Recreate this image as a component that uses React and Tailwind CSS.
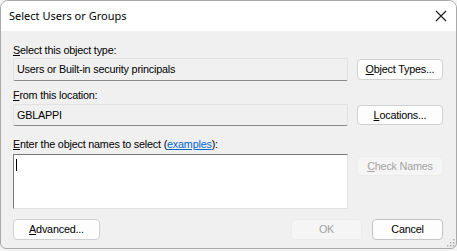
export default function App() {
  const body = { fontFamily: '"Liberation Sans", Arial, sans-serif' };

  return (
    <div className="w-[457px] h-[251px] bg-[#f3f3f3] overflow-hidden">
      <div className="relative w-[457px] h-[249px] flex flex-col rounded-t-[8px] rounded-b-[6px] border border-[#a9a9a9] overflow-hidden bg-[#f0f0f0]">
        {/* title bar */}
        <div className="h-[30px] bg-white flex items-center justify-between pl-[8px] pr-[9px] shrink-0">
          <span
            className="text-[11px] text-black"
            style={{ fontFamily: '"Noto Sans", "Open Sans", sans-serif' }}
          >
            Select Users or Groups
          </span>
          <svg width="12" height="12" viewBox="0 0 12 12">
            <path d="M1 1 L11 11 M11 1 L1 11" stroke="#1a1a1a" strokeWidth="1.1" />
          </svg>
        </div>

        {/* body */}
        <div className="flex-1 flex flex-col pl-[12px] pr-[13px] pt-[12px] text-[10.8px] tracking-[-0.2px] text-black" style={body}>
          <div className="h-[14px] leading-[14px]">
            <span className="underline">S</span>elect this object type:
          </div>
          <div className="flex items-center gap-[9px] mt-[1px]">
            <div className="flex-1 h-[23px] flex items-center pl-[3px] bg-[#f0f0f0] border border-[#e2e2e2] border-b-[#8a8a8a] rounded-[2px]">
              Users or Built-in security principals
            </div>
            <button className="w-[86px] h-[21px] bg-[#fdfdfd] border border-[#d0d0d0] rounded-[4px] leading-none">
              <span className="underline">O</span>bject Types...
            </button>
          </div>

          <div className="h-[14px] leading-[14px] mt-[7px]">
            <span className="underline">F</span>rom this location:
          </div>
          <div className="flex items-center gap-[9px] mt-[2px]">
            <div className="flex-1 h-[22px] flex items-center pl-[3px] bg-[#f0f0f0] border border-[#e2e2e2] border-b-[#8a8a8a] rounded-[2px]">
              GBLAPPI
            </div>
            <button className="w-[86px] h-[20px] bg-[#fdfdfd] border border-[#d0d0d0] rounded-[4px] leading-none">
              <span className="underline">L</span>ocations...
            </button>
          </div>

          <div className="h-[14px] leading-[14px] mt-[11px]">
            <span className="underline">E</span>nter the object names to select (<span className="text-[#0066cc] underline">examples</span>):
          </div>
          <div className="flex items-start gap-[9px] mt-[3px]">
            <div className="flex-1 h-[55px] bg-white border border-[#7a7a7a] border-r-[#e3e3e3] border-b-[#e3e3e3] pl-[2px] pt-[4px]">
              <div className="w-[1px] h-[12px] bg-black"></div>
            </div>
            <button className="w-[86px] h-[20px] mt-[2px] bg-[#f5f5f5] border border-[#ececec] rounded-[4px] leading-none text-[#a3a3a3]">
              <span className="underline">C</span>heck Names
            </button>
          </div>

          <div className="flex items-center mt-[10px]">
            <button className="w-[87px] h-[21px] bg-[#fdfdfd] border border-[#d0d0d0] rounded-[4px] leading-none">
              <span className="underline">A</span>dvanced...
            </button>
            <div className="flex-1"></div>
            <button className="w-[71px] h-[21px] bg-[#f5f5f5] border border-[#ececec] rounded-[4px] leading-none text-[#a3a3a3]">
              OK
            </button>
            <button className="w-[71px] h-[21px] ml-[10px] bg-[#fdfdfd] border border-[#c4c4c4] rounded-[4px] leading-none">
              Cancel
            </button>
          </div>
        </div>

        {/* resize grip */}
        <svg width="9" height="9" viewBox="0 0 9 9" className="absolute right-[1px] bottom-[1px]">
          <rect x="7" y="1" width="1.5" height="1.5" fill="#a8a8a8" />
          <rect x="4" y="4" width="1.5" height="1.5" fill="#a8a8a8" />
          <rect x="7" y="4" width="1.5" height="1.5" fill="#a8a8a8" />
          <rect x="1" y="7" width="1.5" height="1.5" fill="#a8a8a8" />
          <rect x="4" y="7" width="1.5" height="1.5" fill="#a8a8a8" />
          <rect x="7" y="7" width="1.5" height="1.5" fill="#a8a8a8" />
        </svg>
      </div>
    </div>
  );
}
